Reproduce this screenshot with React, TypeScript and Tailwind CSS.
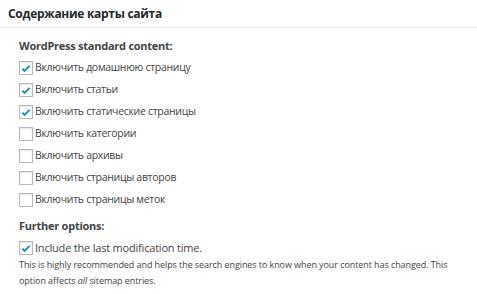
const items = [
  { id: 1, label: "Включить домашнюю страницу", checked: true },
  { id: 2, label: "Включить статьи", checked: true },
  { id: 3, label: "Включить статические страницы", checked: true },
  { id: 4, label: "Включить категории", checked: false },
  { id: 5, label: "Включить архивы", checked: false },
  { id: 6, label: "Включить страницы авторов", checked: false },
  { id: 7, label: "Включить страницы меток", checked: false },
];

const Box = ({ checked }: { checked: boolean }) => {
  return (
    <span className="w-[14px] h-[14px] border border-[#b4b9be] bg-white shadow-[inset_0_1px_2px_rgba(0,0,0,0.1)] flex items-center justify-center shrink-0">
      {checked && (
        <svg width="13" height="13" viewBox="0 0 20 20">
          <path d="M4 10.5l3.6 3.6L16 5.5" fill="none" stroke="#1e8cbe" strokeWidth="3.2" />
        </svg>
      )}
    </span>
  );
};

const App = () => {
  return (
    <div className="w-[477px] h-[294px] bg-white text-[#444] font-['Open_Sans',sans-serif] overflow-hidden">
      <div className="h-[28px] border-b border-[#eee] px-[8px] flex items-center">
        <div className="text-[12px] font-bold tracking-[-0.3px] text-[#23282d]">Содержание карты сайта</div>
      </div>
      <div className="px-[19px] pt-[9px]">
        <div className="text-[11px] font-bold tracking-[-0.25px] leading-[18px]">WordPress standard content:</div>
        <div className="mt-[2px] flex flex-col">
          {items.map((item) => {
            return (
              <div key={item.id} className="h-[22px] flex items-center gap-[2px]">
                <Box checked={item.checked} />
                <span className="text-[10.5px] tracking-[-0.3px]">{item.label}</span>
              </div>
            );
          })}
        </div>
        <div className="mt-[6px] text-[11px] font-bold tracking-[-0.25px] leading-[18px]">Further options:</div>
        <div className="mt-[2px] h-[22px] flex items-center gap-[2px]">
          <Box checked={true} />
          <span className="text-[11px] tracking-[-0.2px]">Include the last modification time.</span>
        </div>
        <p className="-mt-[2px] text-[9px] tracking-[-0.08px] leading-[16px]">
          This is highly recommended and helps the search engines to know when your content has changed. This option affects <i>all</i> sitemap entries.
        </p>
      </div>
    </div>
  );
};

export default App;
